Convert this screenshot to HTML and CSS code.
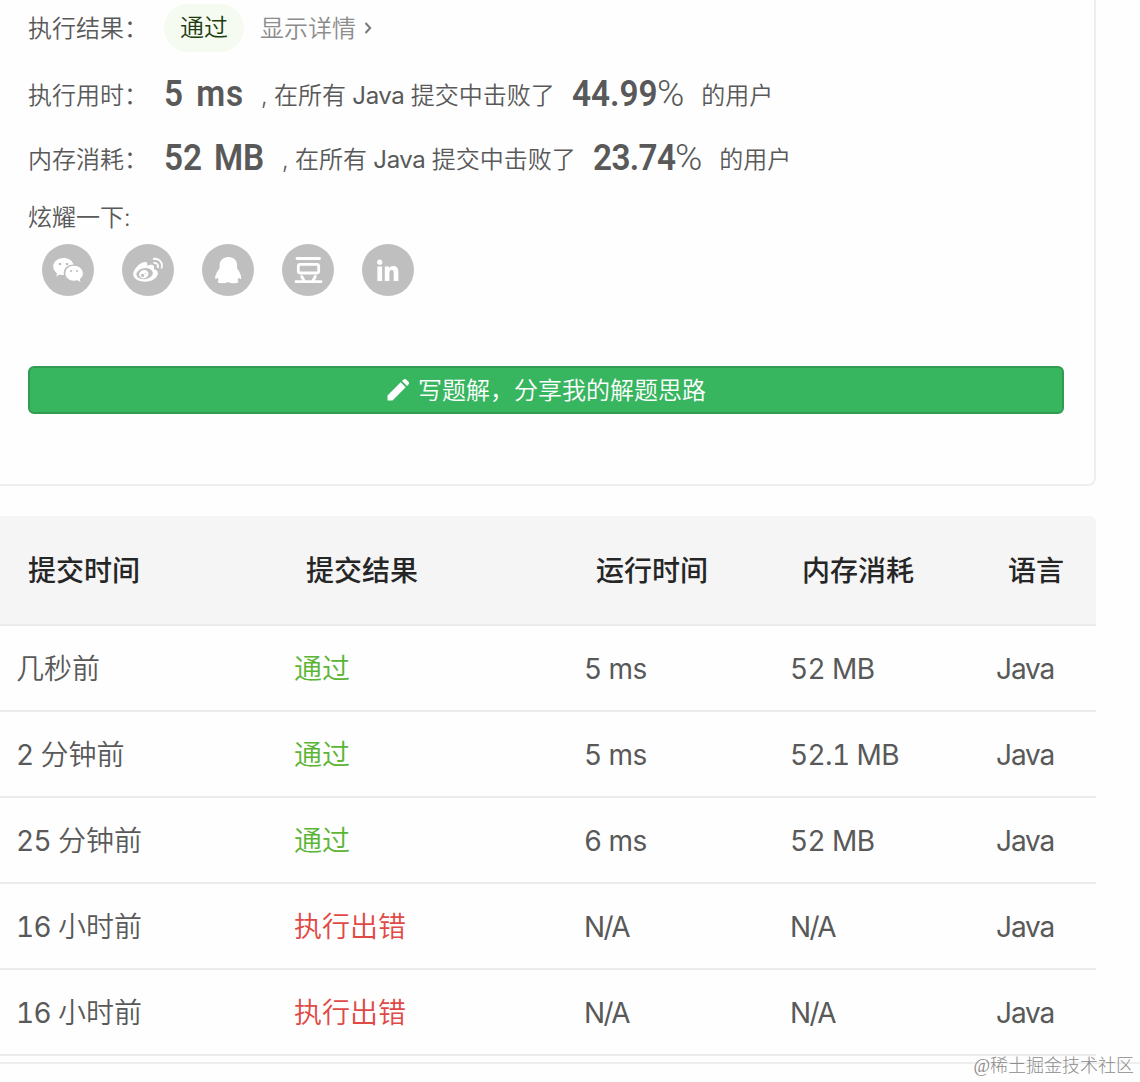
FILE: index.html
```html
<!DOCTYPE html>
<html lang="zh-CN">
<head>
  <meta charset="UTF-8" />
  <meta name="viewport" content="width=device-width, initial-scale=1.0"/>
  <title>提交记录</title>
  <link rel="stylesheet" href="styles.css">
</head>
<body>

  <div class="result-card">
    <div class="row row-status">
      <span class="label">执行结果：</span>
      <span class="badge">通过</span>
      <a class="detail">显示详情
        <svg viewBox="0 0 8 14"><path d="M1.500 2l4.700 5-4.700 5"/></svg>
      </a>
    </div>

    <div class="row row-time">
      <span class="label">执行用时：</span>
      <span class="value">5 ms</span>
      <span class="text">, 在所有 <b>Java</b> 提交中击败了</span>
      <span class="percent"><b>44.99</b>%</span>
      <span class="text">的用户</span>
    </div>

    <div class="row row-memory">
      <span class="label">内存消耗：</span>
      <span class="value">52 MB</span>
      <span class="text">, 在所有 <b>Java</b> 提交中击败了</span>
      <span class="percent"><b>23.74</b>%</span>
      <span class="text">的用户</span>
    </div>

    <div class="share-title">炫耀一下:</div>
    <div class="share">
      <!-- wechat -->
      <svg viewBox="0 0 52 52">
        <circle class="bg" cx="26" cy="26" r="26"/>
        <path d="M21.500 14c-5.900 0-10.300 3.700-10.300 8.600 0 2.800 1.500 5.200 3.900 6.800l-.9 3.100 3.600-1.900c1.400.4 2.700.5 4.200.5-1.500-6 3.200-10.500 9.500-10.500-1-4-5-6.600-10-6.600z"/>
        <path d="M32 21.800c-5 0-8.600 3.300-8.600 7.400s3.600 7.500 8.600 7.500c1.200 0 2.300-.2 3.300-.5l3.200 1.700-.8-2.800c2-1.400 3.200-3.500 3.200-5.900 0-4.100-3.900-7.400-8.900-7.400z"/>
        <g class="bg"><circle cx="18" cy="20" r="1.300"/><circle cx="25" cy="20" r="1.300"/><circle cx="29" cy="27" r="1.100"/><circle cx="35" cy="27" r="1.100"/></g>
      </svg>
      <!-- weibo -->
      <svg viewBox="0 0 52 52">
        <circle class="bg" cx="26" cy="26" r="26"/>
        <path d="M23.500 18c1.900.2 2.200 1.800 1.500 3.800 3-1.200 5.700-1.400 6.700.1.600.9.500 1.900 0 3.200 2.600.8 4.200 2 4.200 4.200 0 4.300-5.900 8.400-12.900 8.400-6.500 0-11.800-3-11.800-7.600C11.200 25.200 18.600 17.600 23.500 18z"/>
        <ellipse class="bg" cx="22.600" cy="29.700" rx="8.300" ry="5.500" transform="rotate(-8 22.600 29.700)"/>
        <ellipse cx="21.800" cy="30.200" rx="4.700" ry="4.100" transform="rotate(-20 21.800 30.200)"/>
        <circle class="bg" cx="20.600" cy="31.400" r="1.600"/><circle class="bg" cx="23.400" cy="29.600" r=".7"/>
        <path class="line" d="M31.500 19c3.200-.4 5.300 1.700 4.200 5M31 15c6.200-1.300 10.400 3.600 8.500 9.500"/>
      </svg>
      <!-- qq -->
      <svg viewBox="0 0 52 52">
        <circle class="bg" cx="26" cy="26" r="26"/>
        <path d="M26.500 13c-5.700 0-9 3.600-8.900 8.800v2.400c-2.500 3.600-4.900 7.300-4.300 10.500.2 1.100 1.600-.1 2.300-1.100.2 1 .7 1.900 1.300 2.700-1.900.7-1.300 2.500.6 2.700 3.400.4 6.300.1 8.500-1 2.200 1.200 5.200 1.500 8.600 1 1.900-.2 2.500-2 .7-2.700.7-.8 1.200-1.700 1.500-2.700.7 1 2 2.200 2.300 1.100.6-3.200-1.600-6.900-4-10.500v-2.400c.1-5.200-3-8.800-8.600-8.800z"/>
      </svg>
      <!-- douban -->
      <svg viewBox="0 0 52 52">
        <circle class="bg" cx="26" cy="26" r="26"/>
        <path class="stroke" d="M15 14.500h22.500M14 37.700h25M19.700 32.500l2.500 4.500M33.300 32.500l-2.500 4.500"/>
        <rect class="stroke" x="16.300" y="20.400" width="20.400" height="8.600" rx="2"/>
      </svg>
      <!-- linkedin -->
      <svg viewBox="0 0 52 52">
        <circle class="bg" cx="26" cy="26" r="26"/>
        <circle cx="17.700" cy="18.200" r="2.600"/>
        <path d="M15.400 22.400h4.700V37h-4.700zM22.800 22.400h4.200v1.900c.9-1.500 2.400-2.300 4.300-2.300 3.900 0 5.100 2.500 5.100 6.500V37h-4.700v-7.700c0-2.100-.5-3.300-2-3.300-1.700 0-2.300 1.200-2.300 3.300V37h-4.600z"/>
      </svg>
    </div>

    <button class="write-btn">
      <svg viewBox="0 0 24 24"><path d="M1.500 22.500v-5L14.700 4.300l5 5L6.500 22.500zM16 3l1.500-1.500c.8-.8 1.900-.8 2.700 0l2.300 2.300c.8.800.8 1.900 0 2.700L21 8z"/></svg>
      <span>写题解，分享我的解题思路</span>
    </button>
  </div>

  <table class="records">
    <colgroup>
      <col class="c-date"><col class="c-result"><col class="c-run"><col class="c-mem"><col class="c-lang">
    </colgroup>
    <thead>
      <tr><th>提交时间</th><th>提交结果</th><th>运行时间</th><th>内存消耗</th><th>语言</th></tr>
    </thead>
    <tbody>
      <tr><td>几秒前</td><td class="ok">通过</td><td class="num">5 ms</td><td class="num">52 MB</td><td class="lang">Java</td></tr>
      <tr><td><b>2 </b>分钟前</td><td class="ok">通过</td><td class="num">5 ms</td><td class="num">52.1 MB</td><td class="lang">Java</td></tr>
      <tr><td><b>25 </b>分钟前</td><td class="ok">通过</td><td class="num">6 ms</td><td class="num">52 MB</td><td class="lang">Java</td></tr>
      <tr><td><b>16 </b>小时前</td><td class="error">执行出错</td><td class="na">N/A</td><td class="na">N/A</td><td class="lang">Java</td></tr>
      <tr><td><b>16 </b>小时前</td><td class="error">执行出错</td><td class="na">N/A</td><td class="na">N/A</td><td class="lang">Java</td></tr>
    </tbody>
  </table>

  <div class="footer-line"></div>
  <div class="watermark">@稀土掘金技术社区</div>

</body>
</html>
```
FILE: styles.css
```css
* {
  box-sizing: border-box;
}

body {
  margin: 0;
  height: 1082px;
  position: relative;
  overflow: hidden;
  font-family: Inter, 'Noto Sans CJK SC', sans-serif;
  font-size: 24px;
  font-weight: 350;
  font-variant-numeric: tabular-nums;
  background-color: #fefefe;
  color: #595959;
}

.result-card {
  width: 1096px;
  height: 486px;
  padding: 0 30px 0 28px;
  border-right: 2px solid #eee;
  border-bottom: 2px solid #eee;
  border-radius: 0 0 8px 0;
}

.row {
  display: flex;
  align-items: center;
  white-space: nowrap;
}

.label {
  width: 136px;
  flex: none;
}

.row-status {
  height: 56px;
}

.row-status .label,
.detail {
  padding-bottom: 4px;
}

.badge {
  width: 80px;
  height: 48px;
  line-height: 48px;
  border-radius: 24px;
  text-align: center;
  background-color: #f6fbf1;
  color: #1f3d12;
}

.detail {
  display: flex;
  align-items: center;
  margin-left: 16px;
  color: #8c8c8c;
}

.detail svg {
  width: 8px;
  height: 14px;
  margin: 4px 0 0 8px;
  fill: none;
  stroke: #7a7a7a;
  stroke-width: 2;
}

.row-time,
.row-memory {
  height: 64px;
  line-height: 64px;
}

.row-time {
  margin-top: 6px;
}

.text b {
  font-weight: 400;
  letter-spacing: -0.4px;
}

.value,
.percent {
  flex: none;
  font-family: Roboto, sans-serif;
  font-size: 37px;
}

/* condensed figures */
.value,
.percent b {
  font-weight: 600;
  transform: scaleX(0.9);
  transform-origin: 0 50%;
}

.value {
  width: 97px;
  letter-spacing: 0.8px;
  word-spacing: 4px;
}

.row-memory .value {
  width: 118px;
  letter-spacing: 0;
}

.percent {
  margin: 0 15px 0 17px;
  font-weight: 300;
  letter-spacing: 2px;
}

.percent b {
  display: inline-block;
  width: 85px;
  letter-spacing: 0;
}

.row-memory .percent b {
  width: 82px;
  letter-spacing: -0.7px;
}

.row-time .label,
.row-memory .label,
.text {
  height: 64px;
  padding-top: 2px;
}

.share-title {
  height: 40px;
  margin-top: 8px;
  line-height: 40px;
}

.share {
  display: flex;
  gap: 28px;
  margin: 6px 0 0 14px;
}

.share svg {
  width: 52px;
  height: 52px;
  fill: #fff;
}

.share .bg {
  fill: #bfbfbf;
}

.share .line {
  fill: none;
  stroke: #fff;
  stroke-width: 1.8;
}

.share .stroke {
  fill: none;
  stroke: #fff;
  stroke-width: 2.8;
  stroke-linecap: round;
}

.write-btn {
  display: flex;
  align-items: center;
  justify-content: center;
  width: 1036px;
  height: 48px;
  margin-top: 70px;
  padding: 0;
  border: 2px solid #329b52;
  border-radius: 6px;
  background-color: #37b55f;
  color: #fff;
  font-family: inherit;
  font-size: 24px;
  font-weight: inherit;
}

.write-btn svg {
  width: 24px;
  height: 24px;
  margin-right: 8px;
  fill: #fff;
}

.write-btn span {
  padding-bottom: 4px;
}

.records {
  width: 1096px;
  margin-top: 30px;
  table-layout: fixed;
  border-collapse: separate;
  border-spacing: 0;
  font-size: 28px;
}

.c-date { width: 278px; }
.c-result { width: 290px; }
.c-run { width: 206px; }
.c-mem { width: 206px; }
.c-lang { width: 116px; }

.records th {
  height: 110px;
  padding: 0 0 2px 28px;
  border-bottom: 2px solid #ebebeb;
  background-color: #f5f5f5;
  color: #262626;
  font-weight: 500;
  text-align: left;
  white-space: nowrap;
}

.records th:last-child {
  border-radius: 0 6px 0 0;
}

.records td {
  height: 86px;
  padding: 0 0 2px 16px;
  border-bottom: 2px solid #ebebeb;
  white-space: nowrap;
}

.records td b {
  font-weight: 400;
  letter-spacing: -0.6px;
}

.records .num,
.records .lang,
.records .na {
  padding: 2px 0 0 16px;
  font-weight: 400;
}

.records .num {
  letter-spacing: -0.6px;
}

.records .lang {
  letter-spacing: -1.1px;
}

.records .na {
  letter-spacing: -1.6px;
}

.records .ok {
  color: #5bb535;
}

.records .error {
  color: #e04a46;
}

.footer-line {
  height: 2px;
  margin-top: 6px;
  background-color: #eee;
}

.watermark {
  position: absolute;
  right: 6px;
  bottom: 3px;
  font-family: 'Liberation Serif', 'Noto Sans CJK SC', serif;
  font-size: 18px;
  font-weight: 300;
  line-height: 26px;
  color: #8c8c8c;
}
```
